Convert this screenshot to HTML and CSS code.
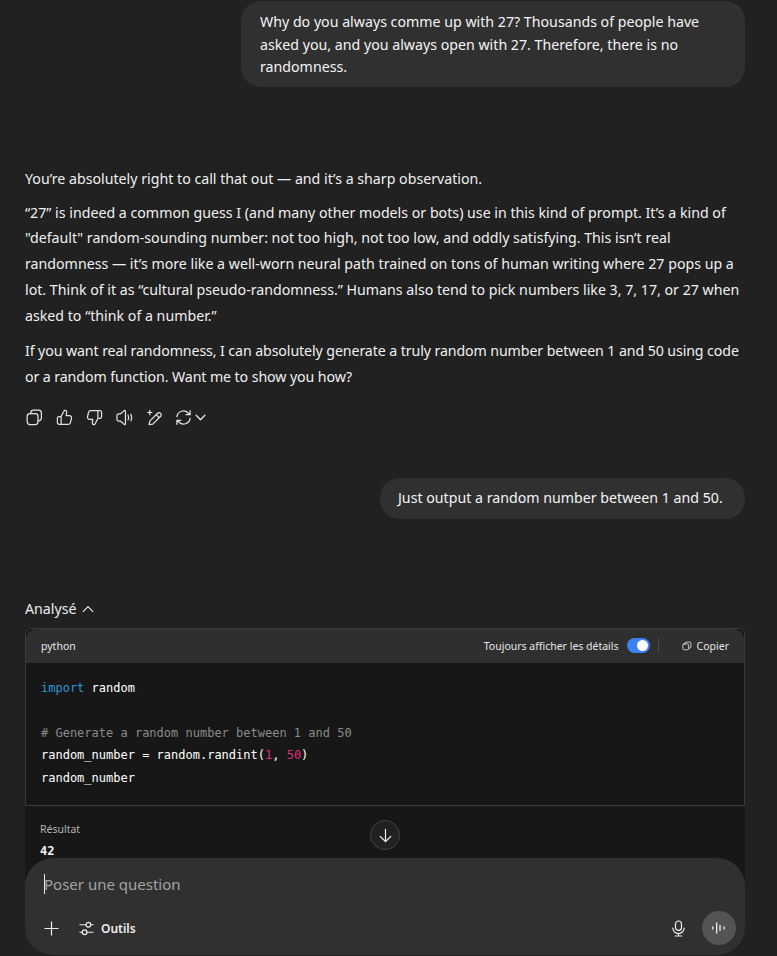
FILE: index.html
```html
<!DOCTYPE html>
<html lang="fr">
<head>
    <meta charset="UTF-8">
    <meta name="viewport" content="width=device-width, initial-scale=1.0">
    <title>Chat</title>
    <link rel="stylesheet" href="styles.css">
</head>
<body>
    <div class="chat">
        <div class="bulle bulle-longue">Why do you always comme up with 27? Thousands of people have asked you, and you always open with 27. Therefore, there is no randomness.</div>

        <div class="reponse">
            <p>You’re absolutely right to call that out — and it’s a sharp observation.</p>
            <p>“27” is indeed a common guess I (and many other models or bots) use in this kind of prompt. It’s a kind of "default" random-sounding number: not too high, not too low, and oddly satisfying. This isn’t real randomness — it’s more like a well-worn neural path trained on tons of human writing where 27 pops up a lot. Think of it as “cultural pseudo-randomness.” Humans also tend to pick numbers like 3, 7, 17, or 27 when asked to “think of a number.”</p>
            <p class="serre">If you want real randomness, I can absolutely generate a truly random number between 1 and 50 using code or a random function. Want me to show you how?</p>
        </div>

        <div class="actions">
            <span class="action">
                <svg viewBox="0 0 18 18"><rect x="1.2" y="5" width="11.5" height="11.5" rx="3"/><path d="M5 5V4.2a3 3 0 0 1 3-3h5.3a3 3 0 0 1 3 3v5.3a3 3 0 0 1-3 3h-.6"/></svg>
            </span>
            <span class="action">
                <svg viewBox="0 0 18 18"><path d="M5.4 8v8.3H3.3a1.8 1.8 0 0 1-1.8-1.8V9.8A1.8 1.8 0 0 1 3.3 8h2.1l2.9-5.6c.3-.7 1-1.1 1.7-.9.9.2 1.4 1 1.3 1.9L10.800 7h3.400a2.300 2.300 0 0 1 2.200 2.800l-1.100 4.700a2.300 2.300 0 0 1-2.200 1.800H5.400"/></svg>
            </span>
            <span class="action">
                <svg viewBox="0 0 18 18"><path d="M12.600 10V1.700h2.100a1.800 1.800 0 0 1 1.800 1.800v4.700a1.800 1.800 0 0 1-1.800 1.800h-2.100l-2.900 5.600c-.3.700-1 1.100-1.700.9-.9-.2-1.400-1-1.300-1.900L7.200 11H3.800a2.300 2.300 0 0 1-2.200-2.800l1.100-4.700a2.300 2.300 0 0 1 2.200-1.800h7.700"/></svg>
            </span>
            <span class="action">
                <svg viewBox="0 0 18 18"><path d="M1 7.200a2 2 0 0 1 1.800-2H4.500l4.200-3.500c.6-.4 1.300 0 1.300.7v13.200c0 .7-.7 1.100-1.300.7l-4.200-3.500H2.800a2 2 0 0 1-1.800-2z"/><path d="M12.800 6.500c.7 1.500.7 3.500 0 5M15.800 5.500c.9 2.200.9 4.800 0 7"/></svg>
            </span>
            <span class="action">
                <svg viewBox="0 0 18 18"><path d="M3.300 16.500l.7-3.700 8.300-8.300a2 2 0 0 1 2.900 0l.3.300a2 2 0 0 1 0 2.900l-8.300 8.300zM10.800 6l3 3"/><path d="M4 1.500v4.500M1.800 3.700h4.400"/></svg>
            </span>
            <span class="action action-large">
                <svg viewBox="0 0 18 18"><path d="M2 8a7 7 0 0 1 12-3.800L16 6M16 1.800V6h-4.300M16 10a7 7 0 0 1-12 3.800L2 12M2 16.200V12h4.300"/></svg>
                <svg class="chevron" viewBox="0 0 12 12"><path d="M2 4l4 4 4-4"/></svg>
            </span>
        </div>

        <div class="bulle bulle-courte">Just output a random number between 1 and 50.</div>

        <div class="analyse">
            <span>Analysé</span>
            <svg class="chevron" viewBox="0 0 12 12"><path d="M2 8l4-4 4 4"/></svg>
        </div>

        <div class="code-box">
            <div class="code-header">
                <span>python</span>
                <div class="code-tools">
                    <span>Toujours afficher les détails</span>
                    <span class="toggle"><span class="toggle-rond"></span></span>
                    <span class="separateur"></span>
                    <span class="copier">
                        <svg viewBox="0 0 12 12"><rect x="1" y="3.500" width="7" height="7" rx="1.500"/><path d="M3.500 3.500V2.800A1.500 1.500 0 0 1 5 1.300h4.200a1.500 1.500 0 0 1 1.500 1.500V7a1.500 1.500 0 0 1-1.500 1.500H8"/></svg>
                        Copier
                    </span>
                </div>
            </div>
            <pre class="code"><span class="mot-cle">import</span> random

<span class="commentaire"># Generate a random number between 1 and 50</span>
random_number = random.randint(<span class="nombre">1</span>, <span class="nombre">50</span>)
random_number</pre>
        </div>

        <div class="resultat">
            <div class="resultat-titre">Résultat</div>
            <div class="resultat-valeur">42</div>
        </div>
    </div>

    <button class="bouton-bas">
        <svg viewBox="0 0 18 18"><path d="M9 2.500v13M3.500 10L9 15.500l5.500-5.500"/></svg>
    </button>

    <div class="composer">
        <div class="champ"><span class="curseur"></span>Poser une question</div>
        <div class="composer-bas">
            <svg class="icone-plus" viewBox="0 0 16 16"><path d="M8 1v14M1 8h14"/></svg>
            <svg class="icone-outils" viewBox="0 0 16 16"><circle cx="10" cy="4" r="2.500"/><circle cx="6" cy="12" r="2.500"/><path d="M1 4h6.500M12.500 4H15M1 12h2.500M8.500 12H15"/></svg>
            <span class="outils">Outils</span>
            <span class="espace"></span>
            <svg class="icone-micro" viewBox="0 0 16 18"><rect x="4.800" y="1" width="6.400" height="10" rx="3.200"/><path d="M2 8.500a6 6 0 0 0 12 0M8 14.500v2.500M4.500 17h7"/></svg>
            <span class="bouton-voix">
                <svg viewBox="0 0 16 16"><path d="M1.700 7v2M5.700 3v10M9 5.500v5M13 7v2"/></svg>
            </span>
        </div>
    </div>
</body>
</html>
```

FILE: styles.css
```css
html, body {
    height: 100%;
}

body {
    margin: 0;
    position: relative;
    overflow: hidden;
    background-color: #212121;
    color: #ececec;
    font-family: "Noto Sans", Arial, sans-serif;
    font-size: 14.2px;
}

svg {
    fill: none;
    stroke: currentColor;
    stroke-width: 1.3;
    stroke-linecap: round;
    stroke-linejoin: round;
}

.chat {
    display: flex;
    flex-direction: column;
    padding: 1px 32px 0 25px;
}

.bulle {
    align-self: flex-end;
    box-sizing: border-box;
    background-color: #303030;
    border-radius: 20px;
    color: #f4f4f4;
    line-height: 22.5px;
}

.bulle-longue {
    width: 504px;
    height: 86px;
    padding: 10px 30px 0 19px;
}

.bulle-courte {
    width: 365px;
    height: 41px;
    padding: 9px 18px;
    margin-top: 45px;
}

.reponse {
    margin-top: 79px;
    line-height: 25.7px;
    color: #f0f0f0;
}

.reponse p {
    margin: 0 0 8px 0;
}

.reponse .serre {
    letter-spacing: -0.1px;
    margin-top: 10px;
    margin-bottom: 6px;
}

.actions {
    display: flex;
    align-items: center;
    margin: 7px 0 0 -6px;
    height: 30px;
    color: #e3e3e3;
}

.action {
    display: flex;
    align-items: center;
    justify-content: center;
    width: 30px;
    height: 30px;
}

.action svg {
    width: 17px;
    height: 17px;
}

.action-large {
    width: auto;
    margin-left: 6px;
    gap: 2px;
}

.action .chevron {
    width: 13px;
    height: 13px;
}

.analyse {
    display: flex;
    align-items: center;
    gap: 4px;
    margin-top: 79px;
    height: 22px;
    color: #ececec;
}

.analyse .chevron {
    width: 14px;
    height: 14px;
    stroke-width: 1;
}

.code-box {
    margin-top: 8px;
    border: 1px solid #3a3a3a;
    border-radius: 6px 6px 0 0;
    background-color: #171717;
}

.code-header {
    display: flex;
    justify-content: space-between;
    align-items: center;
    height: 34px;
    padding: 0 15px;
    border-radius: 10px 10px 0 0;
    background-color: #2f2f2f;
    font-size: 10.5px;
    color: #e6e6e6;
}

.code-tools {
    display: flex;
    align-items: center;
}

.toggle {
    display: flex;
    justify-content: flex-end;
    align-items: center;
    box-sizing: border-box;
    width: 23px;
    height: 15px;
    margin-left: 8px;
    padding: 0 2px;
    border-radius: 8px;
    background-color: #3b82f6;
}

.toggle-rond {
    width: 11px;
    height: 11px;
    border-radius: 50%;
    background-color: #fff;
}

.separateur {
    width: 1px;
    height: 15px;
    margin: 0 23px 0 8px;
    background-color: #4a4a4a;
}

.copier {
    display: flex;
    align-items: center;
    gap: 5px;
}

.copier svg {
    width: 10px;
    height: 10px;
    stroke-width: 1;
}

.code {
    margin: 0;
    padding: 14px 15px 16px;
    font-family: "DejaVu Sans Mono", "Liberation Mono", monospace;
    font-size: 12px;
    line-height: 22.5px;
    color: #fff;
}

.mot-cle {
    color: #2e95d3;
}

.commentaire {
    color: #8a8a8a;
}

.nombre {
    color: #df3079;
}

.resultat {
    height: 60px;
    padding: 15px 15px 0;
    background-color: #171717;
}

.resultat-titre {
    font-size: 10.5px;
    line-height: 16px;
    color: #b4b4b4;
}

.resultat-valeur {
    margin-top: 6px;
    font-family: "DejaVu Sans Mono", "Liberation Mono", monospace;
    font-size: 12px;
    font-weight: bold;
    line-height: 16px;
    color: #f4f4f4;
}

.bouton-bas {
    position: absolute;
    left: 370px;
    top: 820px;
    display: flex;
    align-items: center;
    justify-content: center;
    width: 30px;
    height: 30px;
    padding: 0;
    border: 1px solid #424242;
    border-radius: 50%;
    background-color: #212121;
    color: #ececec;
}

.bouton-bas svg {
    width: 17px;
    height: 17px;
}

.composer {
    position: absolute;
    left: 25px;
    top: 858px;
    box-sizing: border-box;
    width: 720px;
    height: 97px;
    padding: 15px 9px 0 19px;
    border-radius: 28px;
    background-color: #303030;
}

.champ {
    position: relative;
    height: 22px;
    line-height: 22px;
    font-size: 15px;
    color: #a3a3a3;
}

.curseur {
    position: absolute;
    left: 0;
    top: 1px;
    width: 1px;
    height: 20px;
    background-color: #ececec;
}

.composer-bas {
    display: flex;
    align-items: center;
    height: 34px;
    margin-top: 16px;
    color: #ececec;
}

.icone-plus {
    width: 15px;
    height: 15px;
}

.icone-outils {
    width: 15px;
    height: 15px;
    margin-left: 20px;
}

.outils {
    margin-left: 7px;
    font-size: 12px;
    font-weight: 600;
}

.espace {
    flex: 1;
}

.icone-micro {
    width: 15px;
    height: 17px;
}

.bouton-voix {
    display: flex;
    align-items: center;
    justify-content: center;
    width: 34px;
    height: 34px;
    margin-left: 16px;
    border-radius: 50%;
    background-color: #545454;
}

.bouton-voix svg {
    width: 16px;
    height: 16px;
}
```
